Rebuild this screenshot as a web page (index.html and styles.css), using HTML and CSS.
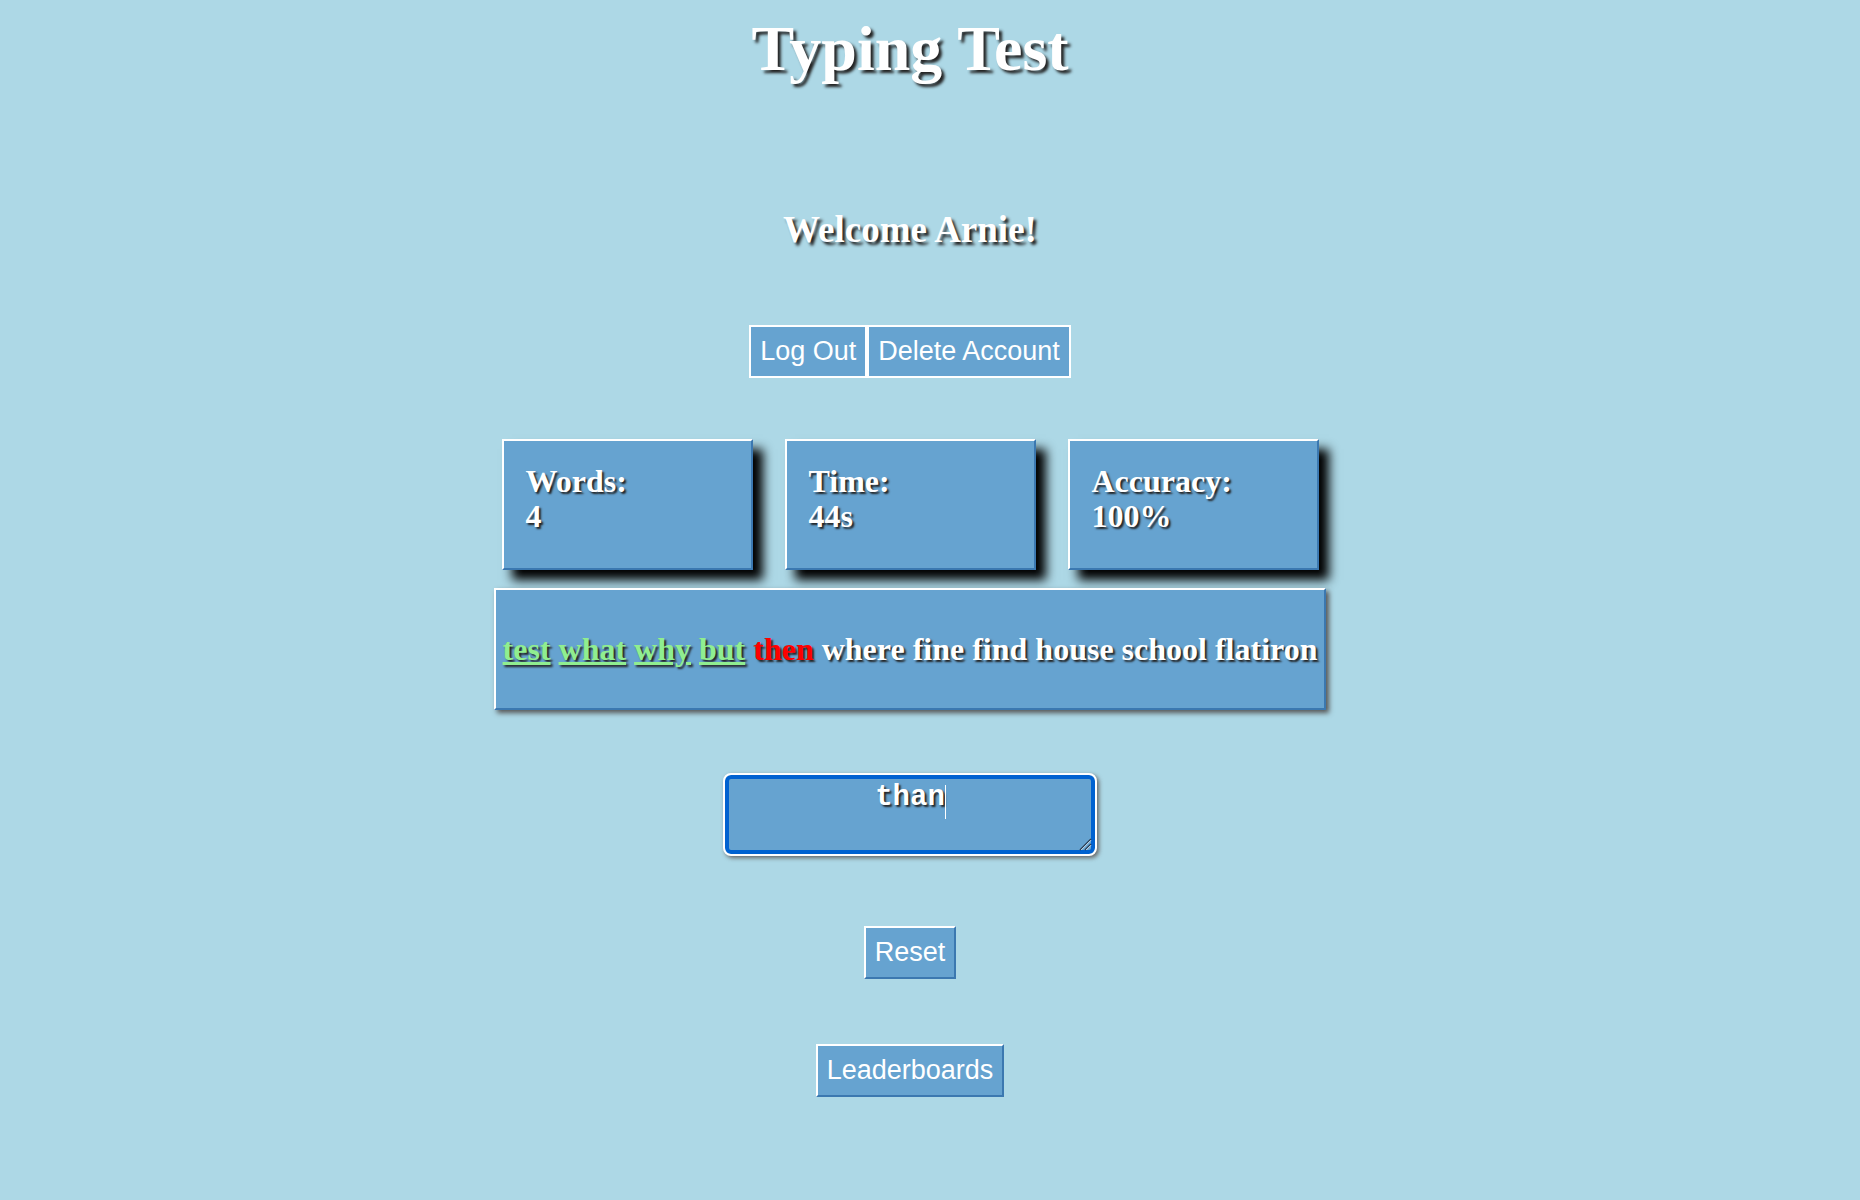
FILE: index.html
```html
<!DOCTYPE html>
<html lang="en">
<head>
<meta charset="utf-8">
<title>Typing Test</title>
<link rel="stylesheet" href="styles.css">
</head>
<body>
<main class="app">
  <h1 class="title">Typing Test</h1>
  <h2 class="welcome">Welcome Arnie!</h2>
  <div class="account">
    <button class="btn btn-flat">Log Out</button><button class="btn btn-flat">Delete Account</button>
  </div>
  <section class="stats">
    <div class="card">Words:<br>4</div>
    <div class="card">Time:<br>44s</div>
    <div class="card">Accuracy:<br>100%</div>
  </section>
  <div class="words">
    <span class="ok">test</span> <span class="ok">what</span> <span class="ok">why</span> <span class="ok">but</span> <span class="bad">then</span> <span>where</span> <span>fine</span> <span>find</span> <span>house</span> <span>school</span> <span>flatiron</span>
  </div>
  <div class="input-wrap">
    <textarea class="typing">than</textarea>
    <span class="caret"></span>
    <svg class="grip" width="14" height="14" viewBox="0 0 14 14">
      <path d="M2 13 L13 2" stroke="#2b3f55" stroke-width="1.6"/>
      <path d="M3.2 13 L13 3.2" stroke="#cfe2f2" stroke-width="1"/>
      <path d="M7 13 L13 7" stroke="#2b3f55" stroke-width="1.6"/>
      <path d="M8.2 13 L13 8.2" stroke="#cfe2f2" stroke-width="1"/>
    </svg>
  </div>
  <button class="btn btn-raised reset">Reset</button>
  <button class="btn btn-raised leaders">Leaderboards</button>
</main>
</body>
</html>
```
FILE: styles.css
```css
html, body {
  margin: 0;
  padding: 0;
}
body {
  background: #add8e6;
  font-family: "Liberation Serif", "Times New Roman", serif;
  color: #fff;
}
.app {
  width: 1820px;
  display: flex;
  flex-direction: column;
  align-items: center;
}
.title {
  margin: 12px 0 0;
  font-size: 64px;
  font-weight: bold;
  line-height: normal;
  text-shadow: 3px 3px 3px #222;
}
.welcome {
  margin: 122px 0 0;
  font-size: 37px;
  font-weight: bold;
  line-height: normal;
  text-shadow: 3px 3px 3px #222;
}
.account {
  margin-top: 74px;
  display: flex;
}
.btn {
  font-family: "Liberation Sans", Arial, sans-serif;
  font-size: 27px;
  line-height: 31px;
  color: #fff;
  background: #66a3d0;
  padding: 9px 9px;
  margin: 0;
  cursor: pointer;
}
.btn-flat {
  border: 2px solid #fff;
}
.btn-raised {
  border: 2px solid;
  border-color: #fff #3b78b0 #3b78b0 #fff;
}
.stats {
  margin-top: 61px;
  display: flex;
  gap: 32px;
}
.card {
  box-sizing: border-box;
  width: 251px;
  height: 131px;
  padding: 23px 22px 0;
  background: #66a3d0;
  border: 2px solid;
  border-color: #fff #3b78b0 #3b78b0 #fff;
  box-shadow: 10px 10px 10px #000;
  font-size: 32px;
  font-weight: bold;
  line-height: 35px;
  text-shadow: 2px 2px 2px #222;
}
.words {
  margin-top: 18px;
  padding: 41px 7px 40px;
  background: #66a3d0;
  border: 2px solid;
  border-color: #fff #3b78b0 #3b78b0 #fff;
  box-shadow: 3px 3px 5px #555;
  font-size: 32px;
  font-weight: bold;
  line-height: normal;
  white-space: nowrap;
  text-shadow: 2px 2px 2px #222;
}
.ok {
  color: #90ee90;
  text-decoration: underline;
}
.bad {
  color: #ff0000;
}
.input-wrap {
  margin-top: 63px;
  position: relative;
  width: 374px;
  height: 83px;
}
.typing {
  display: block;
  box-sizing: border-box;
  width: 374px;
  height: 83px;
  margin: 0;
  padding: 6px 8px;
  background: #66a3d0;
  border: 2px solid #fff;
  border-radius: 8px;
  box-shadow: inset 0 0 0 4px #0062d1, 2px 2px 4px #666;
  outline: none;
  font-family: "Liberation Mono", "Courier New", monospace;
  font-size: 29px;
  font-weight: bold;
  color: #fff;
  text-align: center;
  text-shadow: 2px 2px 2px #222;
  resize: none;
}
.caret {
  position: absolute;
  left: 222px;
  top: 12px;
  width: 1px;
  height: 34px;
  background: #fff;
}
.grip {
  position: absolute;
  right: 5px;
  bottom: 5px;
}
.reset {
  margin-top: 70px;
}
.leaders {
  margin-top: 65px;
}
```
